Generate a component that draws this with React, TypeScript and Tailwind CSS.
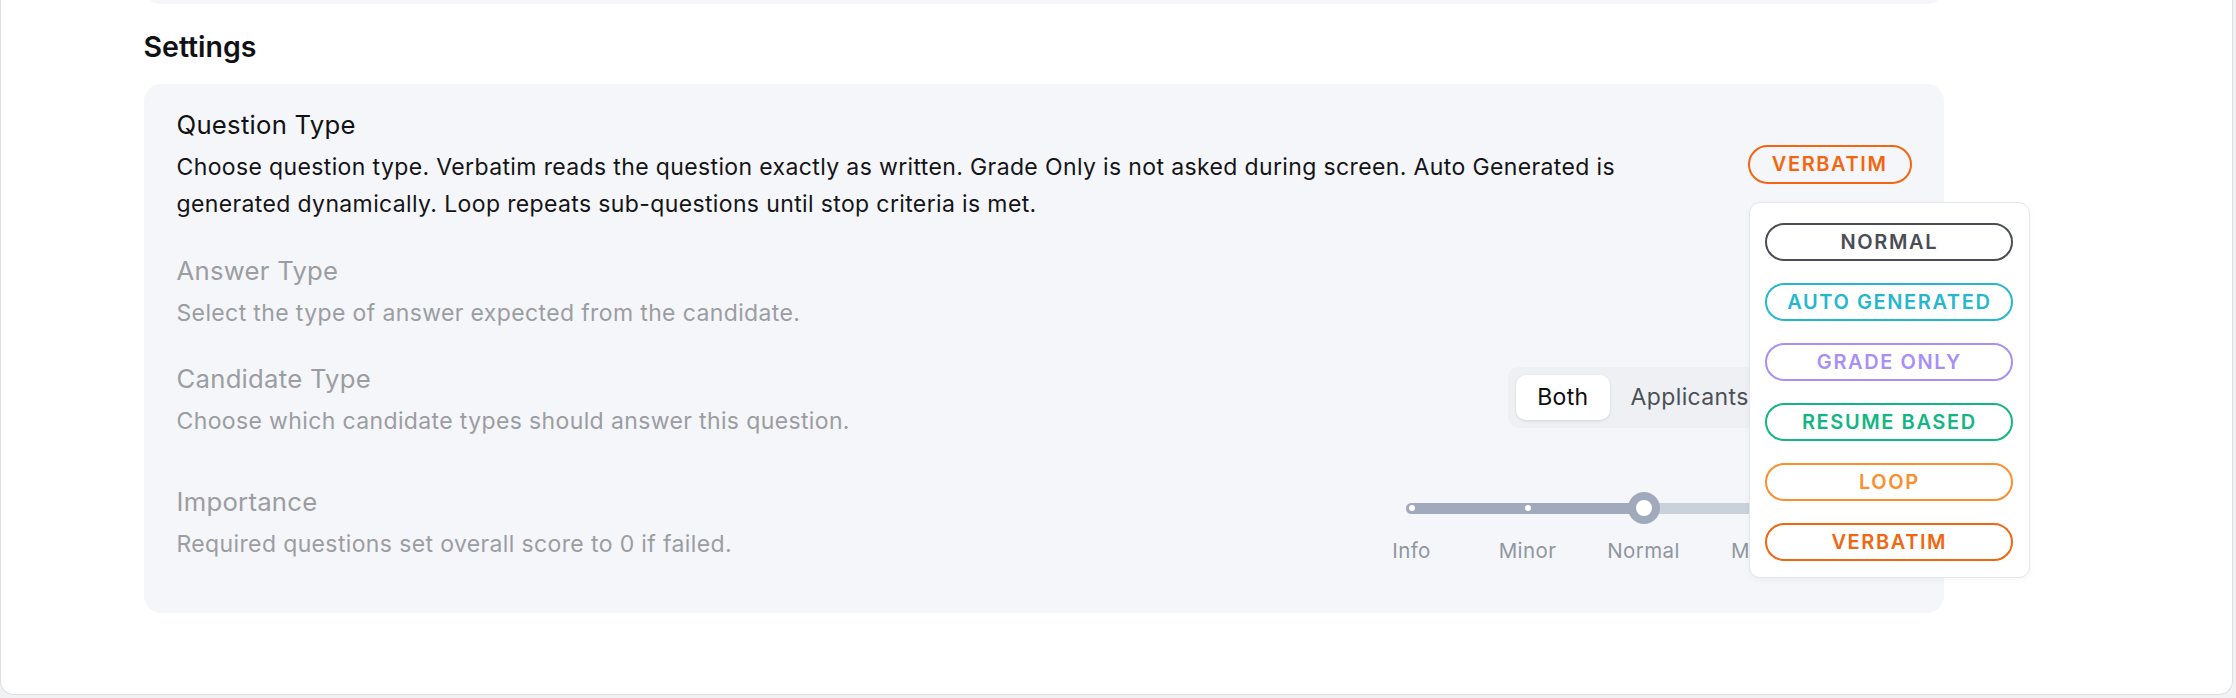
import React from 'react';

type Option = { label: string; cls: string };

const QUESTION_TYPES: Option[] = [
  { label: 'NORMAL', cls: 'border-[#4a4d55] text-[#4a4d55]' },
  { label: 'AUTO GENERATED', cls: 'border-[#25b7d0] text-[#25b7d0]' },
  { label: 'GRADE ONLY', cls: 'border-[#a88ff8] text-[#a88ff8]' },
  { label: 'RESUME BASED', cls: 'border-[#13b683] text-[#13b683]' },
  { label: 'LOOP', cls: 'border-[#fc8e2e] text-[#fc8e2e]' },
  { label: 'VERBATIM', cls: 'border-[#f2660f] text-[#f2660f]' },
];

// The last step sits under the open picker, so only its tick is drawn.
const IMPORTANCE = ['Info', 'Minor', 'Normal', 'Major', ''];
const STEP = 116;
const SELECTED = 2;

function Row({
  title,
  desc,
  muted,
  children,
}: {
  title: string;
  desc: string;
  muted?: boolean;
  children?: React.ReactNode;
}) {
  return (
    <div className="flex items-center gap-[40px]">
      <div className="min-w-0 flex-1">
        <div
          className={
            muted
              ? 'text-[25.7px] leading-[40px] tracking-[0.01em] text-[#9b9da2]'
              : 'text-[25.7px] leading-[40px] tracking-[0.01em] text-[#111114]'
          }
        >
          {title}
        </div>
        <p
          className={
            muted
              ? 'mt-[4px] text-[23px] leading-[37px] tracking-[0.016em] text-[#9b9da2]'
              : 'mt-[4px] text-[23px] leading-[37px] tracking-[0.016em] text-[#141416]'
          }
        >
          {desc}
        </p>
      </div>
      {children}
    </div>
  );
}

function QuestionTypePicker() {
  return (
    <div className="relative shrink-0">
      <span className="flex h-[39px] items-center justify-center rounded-full border-2 border-[#f2660f] px-[22px] text-[20px] font-semibold tracking-[0.08em] text-[#f2660f]">
        VERBATIM
      </span>
      <div className="absolute left-[1px] top-full z-10 mt-[18px] flex w-[281px] flex-col gap-[22px] rounded-[11px] border-[1.5px] border-[#e4e6ea] bg-white px-[15.5px] pb-[16.5px] pt-[20px] shadow-[0_2px_6px_rgba(0,0,0,0.04)]">
        {QUESTION_TYPES.map((o) => (
          <span
            key={o.label}
            className={`flex h-[38px] items-center justify-center rounded-full border-2 bg-white text-[20px] font-semibold tracking-[0.08em] ${o.cls}`}
          >
            {o.label}
          </span>
        ))}
      </div>
    </div>
  );
}

function CandidateToggle() {
  return (
    <div className="-mr-[9px] mb-[4px] flex shrink-0 rounded-[11px] bg-[#eef0f3] p-[8px]">
      <button className="h-[45px] rounded-[10px] bg-white px-[21px] text-[23px] tracking-[0.016em] text-[#0d0d0f] shadow-[0_1px_3px_rgba(0,0,0,0.12)]">
        Both
      </button>
      <button className="h-[45px] px-[21px] text-[23px] tracking-[0.016em] text-[#4b5058]">Applicants</button>
      <button className="h-[45px] px-[21px] text-[23px] tracking-[0.016em] text-[#4b5058]">Referrals</button>
    </div>
  );
}

function ImportanceSlider() {
  const knob = 6 + SELECTED * STEP;
  return (
    <div className="mr-[30px] w-[476px] shrink-0 pb-[12.5px] pt-[35px]">
      <div className="relative h-[11px] rounded-full bg-[#cbd1db]">
        <div className="h-full rounded-full bg-[#a1aabc]" style={{ width: knob }} />
        {IMPORTANCE.map((_, i) =>
          i === SELECTED ? null : (
            <span
              key={i}
              className="absolute top-1/2 h-[6px] w-[6px] -translate-x-1/2 -translate-y-1/2 rounded-full bg-white"
              style={{ left: 6 + i * STEP }}
            />
          ),
        )}
        <span
          className="absolute top-1/2 h-[32px] w-[32px] -translate-x-1/2 -translate-y-1/2 rounded-full border-[8px] border-[#a1aabc] bg-white"
          style={{ left: knob }}
        />
      </div>
      <div className="-mx-[52px] mt-[23.5px] flex">
        {IMPORTANCE.map((l, i) => (
          <span
            key={i}
            className="h-[28px] w-[116px] text-center text-[20.5px] leading-[28px] tracking-[0.02em] text-[#9096a0]"
          >
            {l}
          </span>
        ))}
      </div>
    </div>
  );
}

export default function App() {
  return (
    <div className="h-[698px] overflow-hidden bg-[#f1f2f4] font-['Inter',sans-serif] antialiased">
      <div className="flex h-[695px] w-[2233px] flex-col rounded-b-[14px] border-x-[1.5px] border-b-[1.5px] border-[#dcdee2] bg-white pl-[142.5px]">
        <div className="-mt-[36px] h-[40px] w-[1800px] shrink-0 rounded-[17px] bg-[#f5f6fa]" />
        <h2 className="mt-[23px] text-[28.5px] font-semibold leading-[40px] text-[#111114]">Settings</h2>
        <div className="mt-[17px] flex w-[1800px] flex-col gap-[27.5px] rounded-[17px] bg-[#f5f6fa] pb-[35.5px] pl-[33px] pr-[32px] pt-[21px]">
          <Row
            title="Question Type"
            desc="Choose question type. Verbatim reads the question exactly as written. Grade Only is not asked during screen. Auto Generated is generated dynamically. Loop repeats sub-questions until stop criteria is met."
          >
            <QuestionTypePicker />
          </Row>
          <Row muted title="Answer Type" desc="Select the type of answer expected from the candidate." />
          <Row muted title="Candidate Type" desc="Choose which candidate types should answer this question.">
            <CandidateToggle />
          </Row>
          <Row muted title="Importance" desc="Required questions set overall score to 0 if failed.">
            <ImportanceSlider />
          </Row>
        </div>
      </div>
    </div>
  );
}
